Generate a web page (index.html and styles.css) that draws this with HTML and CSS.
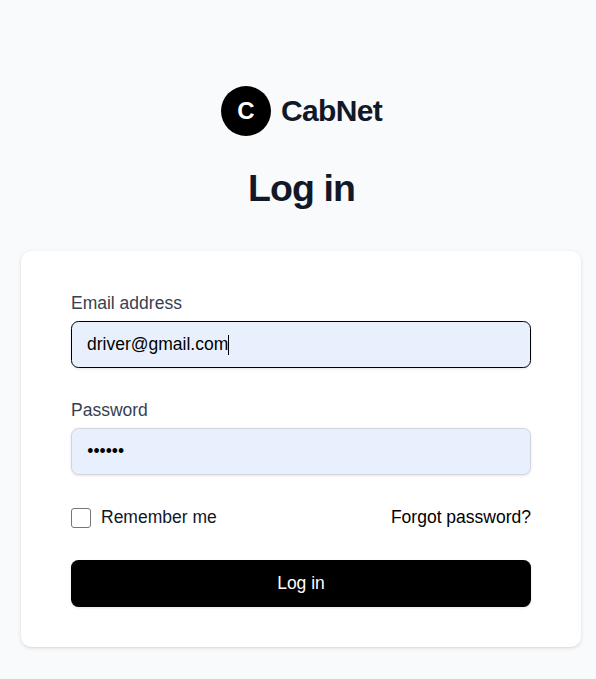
FILE: index.html
```html
<!DOCTYPE html>
<html lang="en">
<head>
<meta charset="utf-8">
<title>Log in - CabNet</title>
<link rel="stylesheet" href="styles.css">
</head>
<body>
<main class="page">
  <header class="brand">
    <span class="brand-mark">C</span>
    <span class="brand-name">CabNet</span>
  </header>
  <h1 class="title">Log in</h1>
  <form class="card">
    <label class="label" for="email">Email address</label>
    <div class="input input-focus" id="email">driver@gmail.com<span class="caret"></span></div>
    <label class="label" for="password">Password</label>
    <div class="input" id="password"><span class="dots">••••••</span></div>
    <div class="options">
      <label class="remember"><span class="checkbox"></span>Remember me</label>
      <a class="forgot">Forgot password?</a>
    </div>
    <button class="submit" type="button">Log in</button>
  </form>
</main>
</body>
</html>
```
FILE: styles.css
```css
* { box-sizing: border-box; }
body {
  margin: 0;
  height: 679px;
  overflow: hidden;
  background: #f9fafb;
  color: #111827;
  font-family: "Liberation Sans", Arial, sans-serif;
  font-size: 17.5px;
  line-height: 25px;
}
.page { padding: 86px 15px 0 21px; }
.brand {
  display: flex;
  align-items: center;
  gap: 10px;
  height: 50px;
  padding-left: 200px;
}
.brand-mark {
  width: 50px;
  height: 50px;
  border-radius: 50%;
  background: #000;
  color: #fff;
  font-size: 24px;
  font-weight: 700;
  line-height: 50px;
  text-align: center;
}
.brand-name {
  padding-bottom: 2px;
  font-size: 30px;
  font-weight: 700;
  letter-spacing: -0.65px;
}
.title {
  margin: 30px 0 0;
  padding-left: 1px;
  font-size: 37.5px;
  line-height: 45px;
  font-weight: 700;
  letter-spacing: -0.94px;
  text-align: center;
}
.card {
  height: 396px;
  margin-top: 40px;
  padding: 40px 50px;
  border-radius: 10px;
  background: #fff;
  box-shadow: 0 1px 4px rgba(0, 0, 0, .1), 0 1px 2px rgba(0, 0, 0, .06);
}
.label { display: block; color: #374151; }
.input {
  display: flex;
  align-items: center;
  height: 47px;
  margin: 5px 0 30px;
  padding: 0 15px;
  border: 1px solid #d1d5db;
  border-radius: 7.5px;
  background: #e8f0fe;
  color: #000;
  box-shadow: 0 1px 3px rgba(0, 0, 0, .1);
}
.input-focus { border-color: #000; }
.caret { width: 1px; height: 20px; background: #000; }
.dots { padding-left: 0.25px; }
.options { display: flex; justify-content: space-between; height: 25px; }
.remember { display: flex; align-items: center; }
.checkbox {
  width: 20px;
  height: 20px;
  margin-right: 10px;
  border: 1px solid #767676;
  border-radius: 3px;
  background: #fff;
}
.forgot { color: #000; }
.submit {
  display: block;
  width: 100%;
  height: 47px;
  margin-top: 30px;
  padding: 0;
  border: 0;
  border-radius: 7.5px;
  background: #000;
  color: #fff;
  font: inherit;
  box-shadow: 0 1px 3px rgba(0, 0, 0, .1);
}
```
